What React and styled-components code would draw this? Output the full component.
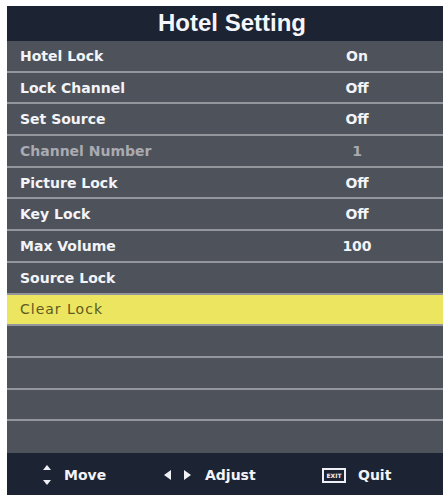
import React from "react";
import styled, { createGlobalStyle } from "styled-components";

const Global = createGlobalStyle`
  html, body {
    margin: 0;
    padding: 0;
    background: #ffffff;
    overflow: hidden;
  }
  body {
    font-family: "DejaVu Sans", "Liberation Sans", sans-serif;
  }
`;

const Page = styled.div`
  width: 443px;
  height: 495px;
  padding: 6px 0 0 7px;
  box-sizing: border-box;
  overflow: hidden;
`;

const Panel = styled.div`
  width: 450px;
  height: 489px;
  display: flex;
  flex-direction: column;
  background: #4e525b;
`;

const Header = styled.div`
  height: 35px;
  flex: none;
  display: flex;
  align-items: center;
  justify-content: center;
  background: #1c2333;
  color: #f4f6fb;
  font-family: "Liberation Sans", Arial, sans-serif;
  font-weight: bold;
  font-size: 24px;
  padding-bottom: 1px;
  box-sizing: border-box;
`;

const List = styled.div`
  height: 412px;
  flex: none;
  display: grid;
  grid-template-rows: repeat(13, 1fr);
`;

const Row = styled.div`
  display: grid;
  grid-template-columns: 287px 100px;
  align-items: center;
  padding-left: 13px;
  border-bottom: 2px solid #93969c;
  background: ${(p) => (p.$active ? "#ece560" : "transparent")};
  color: ${(p) => (p.$active ? "#5f5a1f" : p.$dim ? "#a9abb1" : "#f3f4f8")};
  font-weight: ${(p) => (p.$active ? "normal" : "bold")};
  letter-spacing: ${(p) => (p.$active ? "1px" : "0")};
  font-size: 14px;
  &:last-child {
    border-bottom: none;
  }
`;

const Value = styled.span`
  text-align: center;
`;

const Footer = styled.div`
  flex: 1;
  display: grid;
  grid-template-columns: 121px 157px auto;
  align-items: center;
  padding: 2px 0 0 35px;
  background: #1c2333;
  color: #f3f4f8;
  font-weight: bold;
  font-size: 14px;
`;

const Hint = styled.div`
  display: flex;
  align-items: center;
  gap: ${(p) => p.$gap}px;
`;

const ExitKey = styled.span`
  width: 20px;
  height: 11px;
  border: 2px solid #eef0f5;
  display: flex;
  align-items: center;
  justify-content: center;
  font-size: 6px;
  font-weight: bold;
  letter-spacing: 0;
  margin-left: 2px;
`;

const items = [
  { label: "Hotel Lock", value: "On" },
  { label: "Lock Channel", value: "Off" },
  { label: "Set Source", value: "Off" },
  { label: "Channel Number", value: "1", dim: true },
  { label: "Picture Lock", value: "Off" },
  { label: "Key Lock", value: "Off" },
  { label: "Max Volume", value: "100" },
  { label: "Source Lock", value: "" },
  { label: "Clear Lock", value: "", active: true },
  { label: "", value: "" },
  { label: "", value: "" },
  { label: "", value: "" },
  { label: "", value: "" },
];

function UpDown() {
  return (
    <svg width="10" height="22" viewBox="0 0 10 22">
      <path d="M1 6 L5 1 L9 6 Z" fill="#eef0f5" />
      <path d="M1 16 L5 21 L9 16 Z" fill="#eef0f5" />
    </svg>
  );
}

function LeftRight() {
  return (
    <svg width="30" height="12" viewBox="0 0 30 12">
      <path d="M8 1 L1 6 L8 11 Z" fill="#eef0f5" />
      <path d="M21 1 L28 6 L21 11 Z" fill="#eef0f5" />
    </svg>
  );
}

export default function App() {
  return (
    <Page>
      <Global />
      <Panel>
        <Header>Hotel Setting</Header>
        <List>
          {items.map((it, i) => (
            <Row key={i} $active={it.active} $dim={it.dim}>
              <span>{it.label}</span>
              <Value>{it.value}</Value>
            </Row>
          ))}
        </List>
        <Footer>
          <Hint $gap={12}>
            <UpDown />
            <span>Move</span>
          </Hint>
          <Hint $gap={12}>
            <LeftRight />
            <span>Adjust</span>
          </Hint>
          <Hint $gap={12}>
            <ExitKey>EXIT</ExitKey>
            <span>Quit</span>
          </Hint>
        </Footer>
      </Panel>
    </Page>
  );
}
